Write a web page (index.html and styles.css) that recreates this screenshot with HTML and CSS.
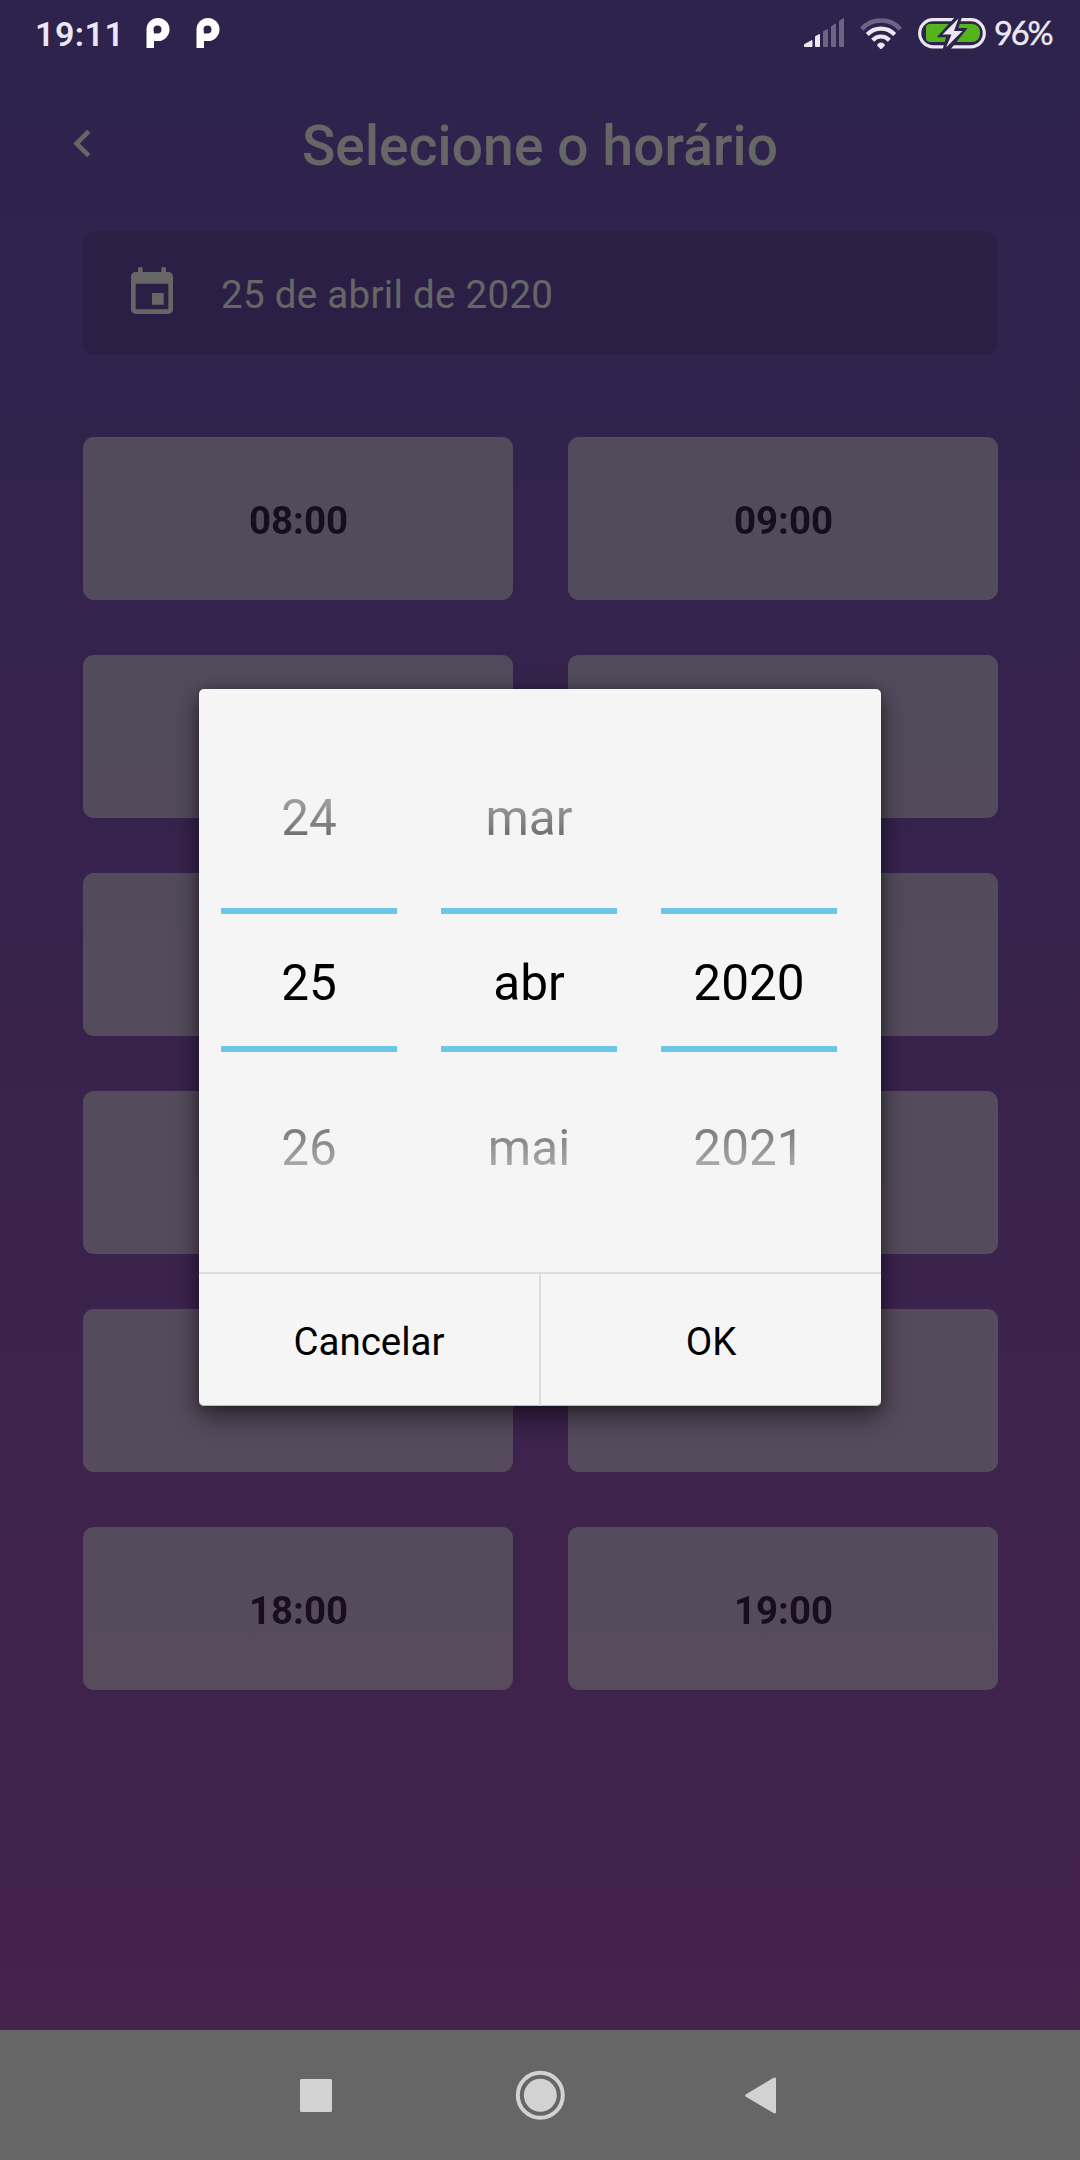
FILE: index.html
```html
<!DOCTYPE html>
<html lang="pt-BR">
<head>
<meta charset="utf-8">
<title>Selecione o horário</title>
<link rel="stylesheet" href="styles.css">
</head>
<body>
<div class="phone">
  <header class="status">
    <span class="clock">19:11</span>
    <svg class="pin" width="24" height="31" viewBox="0 0 24 31"><path fill="#fff" fill-rule="evenodd" d="M0.5 30V11.500A11.500 11.500 0 1 1 12 23H8V30ZM8 15.500H11.500A4 4 0 1 0 7.500 11.500Z"/></svg>
    <svg class="pin" width="24" height="31" viewBox="0 0 24 31"><path fill="#fff" fill-rule="evenodd" d="M0.5 30V11.500A11.500 11.500 0 1 1 12 23H8V30ZM8 15.500H11.500A4 4 0 1 0 7.500 11.500Z"/></svg>
    <svg class="signal" width="42" height="32" viewBox="0 0 42 32">
      <g fill="#ebe8f1" stroke="#ebe8f1" stroke-width="1" stroke-linejoin="round"><path d="M.5 28.500V26.500L8 22.500V28.500Z"/><path d="M11.500 28.500V18.500L15.500 16.500V28.500Z"/></g>
      <g fill="#6b6485" stroke="#6b6485" stroke-width="1" stroke-linejoin="round"><path d="M19.500 28.500V13.500L23.500 11.500V28.500Z"/><path d="M27.500 28.500V8.500L31.500 6V28.500Z"/><path d="M35.500 28.500V3L39.500 .5V28.500Z"/></g>
    </svg>
    <svg class="wifi" width="42" height="32" viewBox="0 0 42 32" fill="none" stroke="#ebe8f1" stroke-width="4.200">
      <path stroke="#6b6485" stroke-width="4.600" d="M1.700 11.200Q9 2.500 21 2.500T40.300 11.200"/>
      <path d="M7.300 16.500Q13 10.700 21 10.700T34.700 16.500"/>
      <path d="M12.600 22.300Q16.200 18.500 21 18.500T29.400 22.300"/>
      <path fill="#ebe8f1" stroke="none" d="M17 27.500Q18 24.500 21 24.500T25 27.500L21.800 30.700Q21 31.300 20.200 30.700Z"/>
    </svg>
    <svg class="battery" width="68" height="31" viewBox="0 0 68 31">
      <rect x="1.700" y="1.700" width="64.600" height="27.100" rx="13.500" fill="none" stroke="#ebe8f1" stroke-width="3.200"/>
      <rect x="8" y="6" width="54" height="18" rx="8" fill="#53b51b"/>
      <rect x="8" y="6" width="14" height="18" rx="4" fill="#53b51b"/>
      <path d="M37 -1L18.700 19.300H28L24.500 32H32L49.700 10H40.500L44 -1Z" fill="#2d254c"/>
      <path d="M40.500 .5L24.500 16.500H33.500L28 29.500L44.500 13H36Z" fill="#ebe8f1"/>
    </svg>
    <span class="percent">96%</span>
  </header>

  <main class="app">
    <div class="topbar">
      <svg class="back" width="55" height="55" viewBox="0 0 24 24"><path fill="#fff" d="M15.410 7.410L14 6l-6 6 6 6 1.410-1.410L10.830 12z"/></svg>
      <h1>Selecione o horário</h1>
    </div>
    <div class="date">
      <svg width="56" height="56" viewBox="0 0 24 24"><path fill="#fff" d="M17 12h-5v5h5v-5zM16 1v2H8V1H6v2H5c-1.110 0-1.990.9-1.990 2L3 19c0 1.100.89 2 2 2h14c1.100 0 2-.9 2-2V5c0-1.100-.9-2-2-2h-1V1h-2zm3 18H5V8h14v11z"/></svg>
      <span>25 de abril de 2020</span>
    </div>
    <div class="hours">
      <button>08:00</button><button>09:00</button>
      <button></button><button></button>
      <button></button><button></button>
      <button></button><button></button>
      <button></button><button></button>
      <button>18:00</button><button>19:00</button>
    </div>
  </main>

  <div class="scrim">
    <section class="dialog">
      <div class="pickers">
        <div class="picker"><span class="prev">24</span><span class="current">25</span><span class="next">26</span></div>
        <div class="picker"><span class="prev">mar</span><span class="current">abr</span><span class="next">mai</span></div>
        <div class="picker"><span class="prev"></span><span class="current">2020</span><span class="next">2021</span></div>
      </div>
      <div class="actions"><button>Cancelar</button><button>OK</button></div>
    </section>
  </div>

  <nav class="navbar">
    <svg width="1080" height="130" viewBox="0 0 1080 130" fill="#d2d2d2">
      <rect x="300" y="49" width="32" height="33" rx="1.500"/>
      <circle cx="540.300" cy="65.300" r="22.500" fill="none" stroke="#d2d2d2" stroke-width="4"/>
      <circle cx="540.300" cy="65.300" r="16.500"/>
      <path d="M746 64.200L773.500 47.800Q776 46.800 776 49V82Q776 84.200 773.500 83L746 66.800Q744.200 65.500 746 64.200Z"/>
    </svg>
  </nav>
</div>
</body>
</html>
```
FILE: styles.css
```css
* { box-sizing: border-box; }

body {
  margin: 0;
  font-family: Roboto, sans-serif;
}

button {
  border: 0;
  padding: 0;
  background: none;
  font: inherit;
  color: inherit;
}

svg { display: block; flex: none; }

.phone {
  position: relative;
  display: flex;
  flex-direction: column;
  width: 1080px;
  height: 2160px;
  overflow: hidden;
  background: linear-gradient(#7159c1, #ab59c1 2030px);
}

/* Status bar stays above the scrim */
.status {
  position: relative;
  z-index: 2;
  display: flex;
  align-items: flex-start;
  height: 70px;
  padding: 18px 0 0 35px;
  color: #ebe8f1;
}

.clock {
  width: 111px;
  margin-top: -4px;
  font-size: 34px;
  line-height: 40px;
  font-weight: 600;
  letter-spacing: .5px;
}

.pin { margin-right: 26px; }
.signal { margin-left: auto; }
.wifi { margin-left: 14px; }
.battery { margin-left: 16px; }

.percent {
  width: 94px;
  margin-top: -5px;
  padding-left: 8px;
  font-family: Lato, sans-serif;
  font-size: 32.5px;
  line-height: 40px;
  letter-spacing: -2.1px;
  -webkit-text-stroke: .4px #ebe8f1;
}

.app {
  flex: 1;
  padding: 0 83px;
  color: #fff;
}

.topbar {
  display: grid;
  grid-template-columns: 55px 1fr 55px;
  align-items: center;
  height: 161px;
  margin: 0 -28px;
}

.back { margin-top: -14px; }

.topbar h1 {
  margin: -9px 0 0;
  text-align: center;
  font-size: 55px;
  line-height: 64px;
  font-weight: 500;
  letter-spacing: .15px;
}

.date {
  display: flex;
  align-items: center;
  height: 124px;
  padding-left: 41px;
  border-radius: 11px;
  background: rgba(0, 0, 0, .1);
  font-size: 38.5px;
  letter-spacing: .3px;
}

.date svg { margin-top: -1px; }
.date span { margin: 3px 0 0 41px; }

.hours {
  display: grid;
  grid-template-columns: 430px 430px;
  grid-auto-rows: 163px;
  gap: 55px;
  margin-top: 82px;
}

.hours button {
  border-radius: 11px;
  background: #fff;
  opacity: .6;
  color: #000;
  font-size: 38.5px;
  font-weight: 700;
  padding: 3px 0 0 1px;
}

.scrim {
  position: absolute;
  inset: 0;
  z-index: 1;
  display: flex;
  flex-direction: column;
  align-items: center;
  padding-top: 689px;
  background: rgba(0, 0, 0, .6);
}

.dialog {
  display: flex;
  flex-direction: column;
  width: 682px;
  height: 717px;
  border-radius: 5px;
  background: #f5f5f5;
  color: #000;
  box-shadow: 0 10px 26px rgba(0, 0, 0, .55), 0 0 8px rgba(0, 0, 0, .2), inset 0 -1px #bbb;
}

.pickers {
  display: flex;
  gap: 44px;
  height: 583px;
  padding: 44px 22px 0;
  font-size: 49.5px;
}

.picker {
  display: grid;
  grid-template-rows: repeat(3, 165px);
  width: 176px;
}

.picker span {
  display: grid;
  place-items: center;
  padding-top: 5px;
}

.current {
  margin: 10px 0 11px;
  border: solid #6bc6e8;
  border-width: 6px 0;
}

.prev { mask-image: linear-gradient(transparent, rgba(0, 0, 0, .87)); }
.next { mask-image: linear-gradient(rgba(0, 0, 0, .82), transparent); }

.actions {
  display: grid;
  grid-template-columns: 342px 340px;
  height: 134px;
  border-top: 2px solid #dcdcdc;
  font-size: 38.5px;
  letter-spacing: .15px;
}

.actions button { padding-top: 3px; }
.actions button:first-child { border-right: 2px solid #dcdcdc; }

.navbar {
  position: relative;
  z-index: 2;
  height: 130px;
  background: #666;
}
```
